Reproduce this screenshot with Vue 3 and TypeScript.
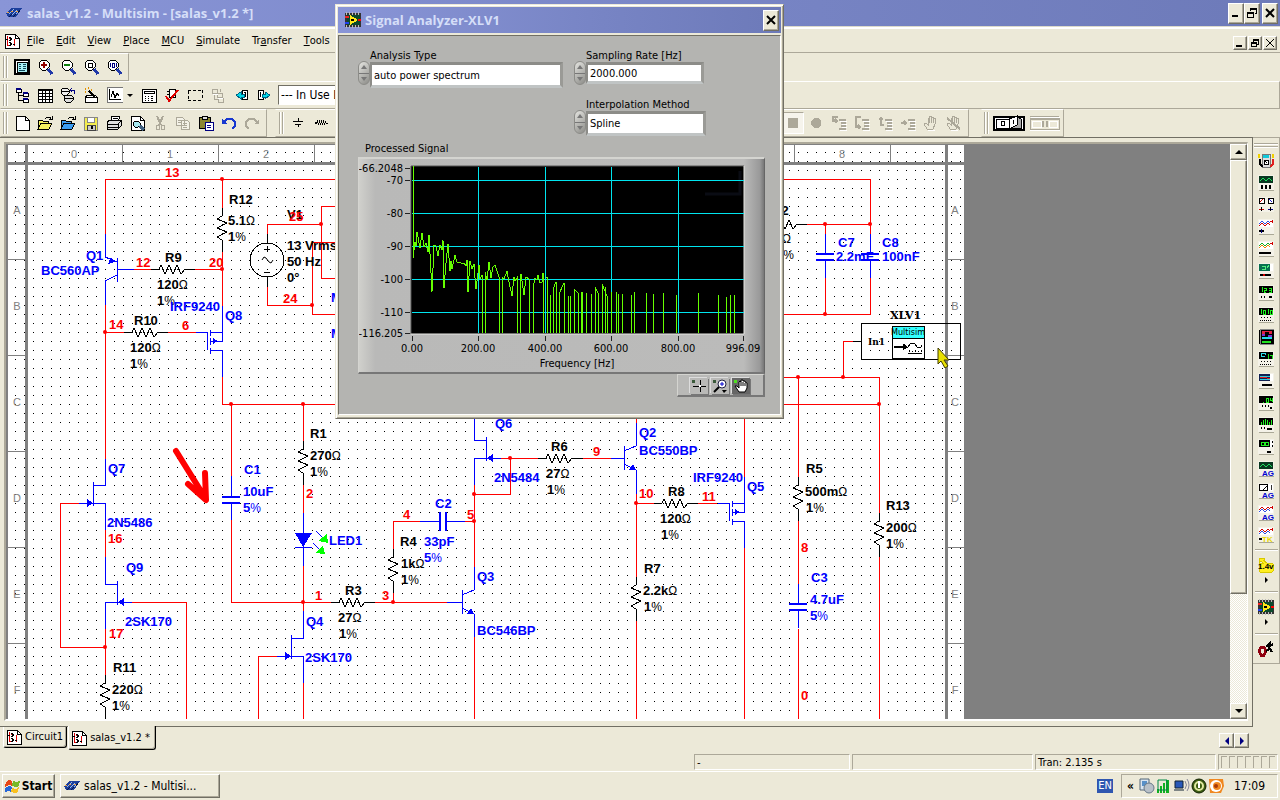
<script setup lang="ts">
import { h, ref } from 'vue'
import type { FunctionalComponent } from 'vue'

type Shape = [d: string, fill?: string, stroke?: string, width?: number]

const K = '#000'
const G = '#aca899'
const N = '#000080'
const R = '#d00000'

const sheet: Shape[] = [['M2 1H11L15 5V15H2Z', '#fff', K], ['M11 1V5H15', 'none', K]]
const docIcon: Shape[] = [
  ['M1 1H11L15 5V15H1Z', '#fff', K], ['M11 1V5H15', 'none', K],
  ['M3 3V12H7M5 5H8M10 6V13', 'none', '#e00000'], ['M5 4L8 6L5 8M5 9L8 11L5 13M2 6H4M9 11H11', 'none', K],
]
const chip: Shape[] = [
  ['M0 8L6 3H16L10 12H2Z', '#1c3f9c'], ['M3 9L8 4M6 10L11 5M9 10L14 5', 'none', '#9cbcec'],
  ['M1 7H3M5 6H7M10 6H12', 'none', '#e8a048'], ['M3 12L6 9M7 12L10 9M12 8L14 5', 'none', '#081848'],
]
const lens = (inner: Shape[]): Shape[] => [
  ['M6 1H9L12 4V8L9 11H5L2 8V4L5 1Z', '#fff', K], ['M11 10L15 15', 'none', '#2038a8', 3], ...inner,
]
const hand: Shape[] = [['M4 14L1 9L3 8L5 10V3H6V8V1H8V8V2H10V8V3H12V9L10 14Z', 'none', G], ['M5 15H12', 'none', '#fff']]
const steps = (arrow: string): Shape[] => [
  ['M9 6H16M11 9H16M11 12H16M9 15H16', 'none', '#fff'],
  ['M8 4H15V6H8ZM10 7H15V9H10ZM10 10H15V12H10ZM8 13H15V15H8Z', G], [arrow, 'none', G, 2],
]
const folder = (front: string): Shape[] => [
  ['M1 14V5H5L6 6H11V8', front, K], ['M1 14L4 8H15L12 14Z', front, K], ['M8 4L10 2H13L14 4M12 4H15V1', 'none', K],
]

const icons: Record<string, Shape[]> = {
  chip, doc: docIcon,
  full: [['M1 1H15V15H1Z', '#fff', K, 2], ['M3 3H13V13H3Z', '#a8f0f4', K], ['M5 5H7M9 5H12M5 7H7M9 7H12M5 9H7M9 9H12M5 11H11', 'none', '#104858']],
  zin: lens([['M4 6H10M7 3V9', 'none', '#900000', 2]]),
  zout: lens([['M4 6H10', 'none', '#108010', 2]]),
  zarea: lens([['M5 4H9V8H5Z', 'none', K]]),
  zfit: lens([['M4 4V8M6 4H8V8H6ZM10 4V8', 'none', N]]),
  tree: [['M2 2H7V5H2ZM9 6H14V9H9ZM9 12H14V15H9Z', '#fff', K], ['M2 2H7M9 6H14M9 12H14', 'none', N, 2], ['M4 5V13H9M4 8H9', 'none', K]],
  table: [['M1 2H15V15H1Z', '#fff', K], ['M1 3H15', 'none', K, 2], ['M1 6H15M1 9H15M1 12H15M5 2V15M8 2V15M12 2V15', 'none', K]],
  db: [['M1 3L3 1H7L9 3V6L7 8H3L1 6Z', '#eee', K], ['M1 4H9', 'none', K], ['M4 10L6 8H11L13 10V13L11 15H6L4 13Z', '#ddd', K], ['M4 11H13', 'none', K], ['M10 3H15M12 1L10 3L12 5M14 3V7', 'none', N]],
  wizard: [['M2 10H14V15H2ZM2 10L5 8H12L14 10', '#fff', K], ['M6 4L12 10', 'none', K, 2], ['M2 2H3M5 1H6M2 5H3M8 3H9', 'none', '#e09000', 2]],
  graph: [['M0 0H16V15H0Z', '#fff', '#777'], ['M2 2V12H14M4 10L6 4L8 11L10 6L12 9', 'none', K]],
  post: [['M1 2H15V15H1Z', '#fff', K], ['M3 4H13V6H3Z', '#fff', K], ['M4 9H5M7 9H8M10 9H12M4 11H5M7 11H8M10 11H12M4 13H5M7 13H8M10 13H12', 'none', K]],
  erc: [['M5 2H11V10H5Z', '#fff', K], ['M3 4H5M3 7H5M11 4H13', 'none', K], ['M2 9L5 14L14 3', 'none', '#e00000', 2]],
  area: [['M1 3H4M6 3H9M11 3H14M15 3V6M15 8V11M14 13H11M9 13H6M4 13H1M1 12V9M1 7V4', 'none', K]],
  parts: [['M2 2H7V6H2ZM7 6H12V10H7ZM8 11H13V15H8ZM4 7V12H8M10 2V5', 'none', G], ['M3 7H8M8 11H13', 'none', '#fff']],
  back: [['M9 3H14V12H9ZM11 5H12V10', '#fff', K], ['M8 5V7H11V10H8V12L3 8Z', '#00d8e8', '#006080']],
  forward: [['M2 3H7V12H2ZM4 5V10', '#fff', K], ['M9 5V7H6V10H9V12L14 8Z', '#00d8e8', '#006080']],
  blank: sheet,
  open: folder('#f4f060'),
  openb: folder('#3c9cf0'),
  save: [['M1 2H14V15H1Z', '#f4ee50', '#888'], ['M4 2H11V7H4Z', '#fff', '#888'], ['M4 10H12V15H4Z', '#ccc', '#444'], ['M9 11V14', 'none', K, 2]],
  print: [['M5 6L6 1H14L12 7', '#fff', K], ['M1 7L4 5H15V11L12 14H1Z', '#ddd', K], ['M1 9H12L15 6M1 12H12M7 3H12M12 9V14', 'none', K]],
  preview: [...sheet, ['M6 6H9L11 8V11L9 12H6L4 10V8Z', '#a8e8f0', K], ['M11 11L15 15', 'none', '#406080', 3]],
  cut: [['M5 1L9 10M11 1L7 10', 'none', G, 2], ['M4 10H7V14H4ZM9 10H12V14H9Z', 'none', G]],
  copy: [['M1 2H7L9 4V10H1ZM6 5H12L14 7V14H6Z', '#f4f2e8', G], ['M3 5H7M3 7H7M8 8H12M8 10H12M8 12H12', 'none', G]],
  paste: [['M1 2H12V13H1Z', '#8c8830', K], ['M4 1H9V4H4Z', '#ddd', K], ['M7 7H15V15H7Z', '#fff', N], ['M9 10H13M9 12H13', 'none', N]],
  undo: [['M3 7L6 4H11L14 7V11L11 14', 'none', '#1838d0', 2], ['M1 4V9H6Z', '#1838d0']],
  redo: [['M13 7L10 4H5L2 7V11L5 14', 'none', G, 2], ['M15 4V9H10Z', G]],
  ground: [['M3 6H13V7H3ZM5 9H11V10H5ZM8 3H9V6H8ZM8 10H9V12H8Z', K]],
  coil: [['M2 7H4V9H2ZM4 5H5V8H4ZM5 8H6V10H5ZM6 5H7V8H6ZM7 8H8V10H7ZM8 5H9V8H8ZM9 8H10V10H9ZM10 5H11V8H10ZM11 8H12V10H11ZM12 6H13V8H12ZM13 8H15V9H13Z', K]],
  stop: [['M3 3H13V13H3Z', G]],
  record: [['M6 3H10L13 6V10L10 13H6L3 10V6Z', G]],
  into: steps('M7 2H2V6H6M4 4L6 6L4 8'),
  over: steps('M7 2H2V12H6M4 10L6 12L4 14'),
  out: steps('M7 10H4V3M2 5L4 3L6 5'),
  cursor: steps('M1 8H6M4 6L6 8L4 10'),
  hand, nohand: [...hand, ['M1 3L14 14', 'none', G, 2]],
  scope: [['M0 1H16V15H0Z', '#333'], ['M2 3H15V13H2Z', '#0a4a2c'], ['M0 5H4', 'none', '#f02020', 2], ['M0 11H4', 'none', '#2040f0', 2], ['M5 3L13 8L5 13Z', '#ffe818'], ['M13 8H16', 'none', '#f00', 2], ['M6 8H9', 'none', K, 2], ['M1 0V3M4 0V3M7 0V3M10 0V3M13 0V3M1 13V16M4 13V16M7 13V16M10 13V16M13 13V16', 'none', '#bbb']],
  probe: [['M1 1H6V3H5L9 6H14L15 7V14L14 15H2L1 14V7L2 6H5L3 4L1 6Z', '#ffef20', '#d8c800']],
  clamp: [['M3 6L1 10L3 14H6L8 10L6 6Z', 'none', '#900010', 3], ['M8 6L12 2L11 6L15 3M8 10L12 8L14 11', 'none', K, 2]],
  flag: [['M1 4L4 2L7 3V8L4 7L0 9Z', '#e84818'], ['M8 3L11 4L15 3L14 8L11 9L7 8Z', '#78b828'], ['M0 10L4 8L7 9L6 14L3 13L0 14Z', '#2868d8'], ['M7 10L11 11L14 9L13 14L10 15L6 14Z', '#f8c020']],
}

const dotRow = 'M3 10H4V11H3ZM6 10H7V11H6ZM9 10H10V11H9ZM12 10H13V11H12ZM2 13H3V14H2ZM4 13H5V14H4ZM6 13H7V14H6ZM8 13H9V14H8ZM10 13H11V14H10ZM12 13H13V14H12Z'
function meter(screen: string, trace: string, color: string, dots = dotRow): Shape[] {
  const filled = dots === dotRow
  return [
    ['M0 0H16V15H0Z', '#f4f2e8'], ['M1 15H16V1', 'none', '#aaa896'], ['M1 1H15V8H1Z', screen], [trace, 'none', color],
    [dots, filled ? K : 'none', filled ? 'none' : K, 2],
  ]
}
const wave = 'M2 6L5 3L8 6L11 3L14 6'
const scopeA = 'M1 5L4 2L7 5L10 2L12 4'
const scopeB = 'M1 7L4 4L7 7L10 4L12 6'
const instruments: { name: string; art: Shape[]; tag?: string; tint?: string }[] = [
  { name: 'Multimeter', art: [['M4 1H12V14H4Z', '#ddd', '#777'], ['M5 2H11V5H5Z', '#10c8d8'], ['M6 7H10V11H6ZM7 8L9 10', '#fff', K], ['M2 6V11L5 14', 'none', K, 2], ['M15 6V11L12 14', 'none', '#e02020', 2], ['M1 1V5M15 1V5', 'none', '#f0d000', 2]] },
  { name: 'Function generator', art: meter('#083820', wave, '#20e060', 'M3 11H5M7 11H9M11 11H13M3 13H5M7 13H9M11 13H13') },
  { name: 'Wattmeter', art: [['M0 0H16V15H0Z', '#f4f2e8'], ['M1 1H6V6H1ZM10 1H15V6H10Z', '#fff', K], ['M2 5L5 2', 'none', R], ['M11 2L14 5', 'none', '#2020d0'], ['M1 12H6', 'none', R], ['M10 12H15', 'none', N], ['M3 10V14M12 10V14', 'none', K]] },
  { name: 'Oscilloscope', art: [...meter('#fff', scopeA, '#3050e0', 'M1 12H6'), [scopeB + 'M12 2H15M14 1V4', 'none', R], ['M3 10V14', 'none', N]] },
  { name: 'Four channel oscilloscope', art: [...meter('#fff', scopeA, '#10b020', 'M1 12H13'), [scopeB, 'none', '#f08000'], ['M12 2H15M14 1V4', 'none', R]] },
  { name: 'Bode plotter', art: [...meter('#087050', 'M4 3H7V6H4M9 5L11 2', '#50f080', 'M2 12H13'), ['M5 12H7', 'none', R, 2], ['M12 1H15V8H12Z', '#fff']] },
  { name: 'Frequency counter', art: meter(K, 'M4 2V7M6 3H8V5H6V7H8M11 3H13V7H11M11 5H13', '#20f020', 'M3 12H4M6 12H7M11 12H14') },
  { name: 'Word generator', art: meter(K, 'M3 2V7M5 3H7V7H5ZM10 2V7M12 3H14V7H12Z', '#20f020') },
  { name: 'Logic converter', art: [['M2 0H16V15H2Z', K, '#888'], ['M4 2H14V5H11V3H7V5H4Z', '#e02040'], ['M4 6H7M10 7H14', 'none', '#8030d0', 2], ['M4 9H14', 'none', '#20d8e8', 2], ['M4 13H13', 'none', '#20e020', 2], ['M1 1V15', 'none', K]] },
  { name: 'Logic analyzer', art: [...meter(K, 'M10 3V8M12 4H14V8', '#20e020'), ['M7 4V2H3V5H7', 'none', '#30e0f0']] },
  { name: 'IV analyzer', art: [...meter('#102050', 'M2 3H12M2 6H12', '#30c8e0', 'M4 12H14'), ['M2 5L6 4L12 6', 'none', '#e02020'], ['M12 1H15V8H12Z', '#fff']] },
  { name: 'Distortion analyzer', art: meter(K, 'M5 7H6M8 3H10V7H8ZM12 3V5H14M14 3V7', '#20f020', 'M4 11H5M7 11H8M10 11H11M12 13H14') },
  { name: 'Spectrum analyzer', art: meter(K, 'M3 8V5M5 8V3M7 8V2M9 8V3M11 8V5M13 8V3', '#20f020', 'M3 11H4M6 11H7M9 12H14') },
  { name: 'Network analyzer', art: [...meter(K, 'M3 3H6V6H3ZM7 3H10V6H7Z', '#20f020', 'M9 13H13'), ['M12 1H15V8H12Z', '#fff'], ['M14 2V4M14 6V8', 'none', K]] },
  { name: 'Agilent function generator', art: meter('#083820', wave, '#20e060', ''), tag: 'AG', tint: '#0000d0' },
  { name: 'Agilent multimeter', art: [...meter('#fff', 'M1 1H9V7H1ZM5 7L9 3', K, ''), ['M13 2V7', 'none', '#333']], tag: 'AG', tint: '#0000d0' },
  { name: 'Agilent oscilloscope', art: [...meter('#fff', scopeA, R, ''), [scopeB, 'none', '#3050e0'], ['M12 2H15M14 1V4', 'none', R]], tag: 'AG', tint: '#0000d0' },
  { name: 'Tektronix oscilloscope', art: [...meter('#fff', scopeA, R, 'M1 12H4'), [scopeB, 'none', '#3050e0'], ['M12 2H15M14 1V4', 'none', R]], tag: 'TK', tint: '#e8d800' },
]

const Icon: FunctionalComponent<{ art: Shape[]; tag?: string; tint?: string }> = (p) =>
  h('svg', { viewBox: '0 0 16 16', width: 16, height: 16, 'shape-rendering': 'crispEdges', 'aria-hidden': 'true' }, [
    ...p.art.map(([d, fill, stroke, width]) => h('path', { d, fill: fill ?? 'none', stroke: stroke ?? 'none', 'stroke-width': width ?? 1 })),
    p.tag ? h('text', { x: 4, y: 15, 'font-size': 8, 'font-weight': 700, fill: p.tint, 'font-family': 'Liberation Sans, sans-serif' }, p.tag) : null,
  ])
Icon.props = ['art', 'tag', 'tint']

const menus: [string, string, string][] = [
  ['', 'F', 'ile'], ['', 'E', 'dit'], ['', 'V', 'iew'], ['', 'P', 'lace'], ['', 'M', 'CU'], ['', 'S', 'imulate'], ['Tr', 'a', 'nsfer'], ['', 'T', 'ools'],
]
const viewTools = ['full', 'zin', 'zout', 'zarea', 'zfit']
const mainTools = ['post', 'erc', 'area', 'parts', 'back', 'forward']
const fileTools = ['blank', 'open', 'openb', 'save', 'print', 'preview', 'cut', 'copy', 'paste', 'undo', 'redo']
const runTools = ['record', 'into', 'over', 'out', 'cursor', 'hand', 'nohand']

const analysis = ref('auto power spectrum')
const rate = ref('2000.000')
const method = ref('Spline')

// Component symbols
const resH = (x: number, y: number) => `M${x} ${y}h8l2 -4l4 9l4 -9l4 9l4 -9l4 9l4 -5h10`
const resV = (x: number, y: number) => `M${x} ${y}v8l-5 3l10 4l-10 5l10 4l-10 5l5 3v12`
const capV = (x: number, y: number) => `M${x} ${y}v20M${x} ${y + 26}v18`
const mos = (x: number, y: number) =>
  `M${x - 26} ${y}h11v18M${x - 12} ${y - 2}v6M${x - 12} ${y + 6}v7M${x - 12} ${y + 16}v6M${x} ${y - 26}v35h-12M${x - 12} ${y}h12M${x - 12} ${y + 18}h12v27`

const resistors = [
  resV(222, 208), resH(151, 269), resH(124, 332), resV(303, 441), resV(105, 675), resH(331, 602), resV(393, 549),
  resH(538, 458), resH(654, 503), resV(636, 577), resH(763, 224), resV(798, 477), resV(879, 513),
  'M267 234V243M267 277V287M853 341H861M264 249H270M267 246V252M264 272H270',
].join('')

const wires = [
  'M105 234V179H870V234M222 179V208M134 269H151M195 269H222M222 250V306M105 305V459M105 332H124M168 332H196',
  'M222 377V404H879M231 404V476M231 520V602H331M303 404V441M303 485V513M303 566V611',
  'M258 719V656H277M303 683V719M267 234V224H321M340 206H321V278H340M267 287V305H312M340 242H312V314H870V277',
  'M79 503H60V647H105M105 530V557M132 602H186V719M105 629V675M375 602H447M474 637V719M474 485V567',
  'M393 549V521H420M393 593V602M465 521H474M501 458H538M510 458V494H474M583 458H611M636 404V423M636 494V577M636 503H654M698 503H717',
  'M744 404V477M744 548V719M636 621V719M807 224H870M825 224V234M825 277V314M853 341H843V377M784 377H879V513M879 557V719',
  'M798 377V477M798 521V584M798 629V719',
].join('')

const parts = [
  'M105 234V257L117 262M117 258V282M117 269H134M117 275L105 281V305',
  mos(222, 332), mos(744, 503), capV(231, 476), capV(825, 234), capV(870, 234), capV(798, 584),
  'M303 513V566M295 547H312M303 611V638H291M291 635V659M277 656H303V683',
  'M105 459V485H93M93 482V506M79 503H105V530M105 557V584H117M117 581V605M132 602H105V629',
  'M447 602H462M462 590V614M462 595L474 590V567M462 608L474 614V637M420 521H439M447 521H465',
  'M474 404V440H486M486 437V461M501 458H474V485M611 458H624M624 446V470M624 451L636 446V423M624 464L636 470V494',
  'M316 531L322 537M313 543L319 549',
].join('')
const plates = 'M222 497H240M222 503H240M816 254H834M816 260H834M861 254H879M861 260H879M789 604H807M789 610H807M440 512V531M446 512V531'
const arrows = [
  'M115 262L108 264L111 257Z', 'M218 341L213 338V344Z', 'M740 512L735 509V515Z', 'M295 533H312L303 547Z', 'M93 503L87 499V507Z',
  'M291 656L285 652V660Z', 'M118 602L124 598V606Z', 'M474 614L467 614L471 608Z', 'M487 458L493 454V462Z', 'M636 470L629 470L633 464Z',
].join('')
const nodes: [number, number][] = [
  [222, 179], [222, 269], [105, 332], [231, 404], [303, 404], [321, 224], [312, 305], [303, 602], [105, 647], [393, 602], [474, 494], [474, 521],
  [510, 458], [636, 503], [825, 224], [870, 224], [825, 314], [798, 377], [843, 377], [879, 404],
]

type Label = [number, number, string]
const blackLabels: Label[] = [
  [229, 204, 'R12'], [228, 225, '5.1Ω'], [228, 241, '1%'], [287, 219, 'V1'], [287, 250, '13 Vrms'], [287, 266, '50 Hz'], [287, 282, '0°'],
  [165, 262, 'R9'], [157, 289, '120Ω'], [157, 305, '1%'], [134, 325, 'R10'], [130, 352, '120Ω'], [130, 368, '1%'],
  [113, 672, 'R11'], [112, 694, '220Ω'], [112, 710, '1%'], [310, 438, 'R1'], [310, 460, '270Ω'], [310, 476, '1%'],
  [345, 595, 'R3'], [338, 622, '27Ω'], [339, 638, '1%'], [400, 546, 'R4'], [401, 568, '1kΩ'], [401, 584, '1%'],
  [551, 451, 'R6'], [546, 478, '27Ω'], [547, 494, '1%'], [668, 496, 'R8'], [660, 523, '120Ω'], [661, 539, '1%'],
  [644, 573, 'R7'], [643, 595, '2.2kΩ'], [644, 611, '1%'], [772, 215, 'R2'], [782, 243, 'Ω'], [776, 259, '1%'],
  [806, 473, 'R5'], [805, 496, '500mΩ'], [806, 512, '1%'], [886, 510, 'R13'], [886, 532, '200Ω'], [886, 548, '1%'],
]
const blueLabels: Label[] = [
  [86, 260, 'Q1'], [41, 275, 'BC560AP'], [170, 311, 'IRF9240'], [225, 320, 'Q8'], [108, 473, 'Q7'], [107, 527, '2N5486'],
  [126, 572, 'Q9'], [125, 626, '2SK170'], [244, 474, 'C1'], [243, 496, '10uF'], [243, 512, '5%'], [329, 545, 'LED1'],
  [306, 626, 'Q4'], [305, 662, '2SK170'], [424, 546, '33pF'], [424, 562, '5%'], [435, 508, 'C2'], [477, 581, 'Q3'],
  [477, 635, 'BC546BP'], [495, 428, 'Q6'], [494, 482, '2N5484'], [639, 437, 'Q2'], [639, 455, 'BC550BP'], [693, 482, 'IRF9240'],
  [747, 491, 'Q5'], [838, 247, 'C7'], [836, 261, '2.2mF'], [882, 247, 'C8'], [882, 261, '100nF'], [811, 582, 'C3'],
  [810, 604, '4.7uF'], [810, 620, '5%'], [331, 302, 'M'], [331, 338, 'M'],
]
const redLabels: Label[] = [
  [165, 177, '13'], [289, 221, '25'], [136, 267, '12'], [209, 267, '20'], [109, 329, '14'], [182, 330, '6'], [283, 303, '24'],
  [108, 543, '16'], [109, 638, '17'], [306, 498, '2'], [315, 600, '1'], [382, 600, '3'], [403, 519, '4'], [467, 519, '5'],
  [593, 456, '9'], [639, 498, '10'], [702, 501, '11'], [801, 552, '8'], [801, 700, '0'],
]
const labelSets: [string, Label[]][] = [['ink', blackLabels], ['part', blueLabels], ['net', redLabels]]
const stem = (s: string) => s.replace(/[Ω%]$/, '')
const unit = (s: string) => s.slice(stem(s).length)

const columnsRuler = [0, 1, 2, 3, 4, 5, 6, 7, 8]
const rowsRuler = ['A', 'B', 'C', 'D', 'E', 'F']

// Spectrum, in plot pixels
const envelope =
  'M1 0V92L3 76L4 80L5 66L8 82L10 67L12 81L14 77L16 86L17 69L20 126L22 79L24 80L26 90L28 79L30 84L31 74L32 122L34 97L36 78L38 105L39 95L40 103L43 89L45 96L48 96L50 98L52 97L54 100L55 94L56 126L58 95L60 103L62 98L63 112L64 123L67 99L68 113L70 109V167' +
  'M73 167V106L75 114L77 96L79 112L81 101L83 99L87 111V167M90 167V111L92 113L95 105L97 116L100 130L102 111L103 115L105 112V167M108 167V113L109 108L112 129L114 111L117 113V167M121 167V122L123 112L125 114L126 109L128 117L130 116L131 107V167M134 111H135V167'
const spikes: [number, number][] = [
  [138, 129], [141, 123], [144, 116], [147, 128], [152, 117], [156, 130], [158, 130], [162, 123], [166, 127], [169, 126], [170, 126], [174, 127], [179, 128],
  [183, 121], [186, 127], [190, 118], [193, 121], [195, 130], [199, 126], [204, 126], [206, 128], [210, 128], [219, 129], [222, 126], [234, 127], [241, 128],
  [251, 127], [264, 129], [286, 127], [306, 129], [314, 131], [318, 129], [322, 129],
]
const spectrum = envelope + spikes.map(([x, y]) => `M${x} 167V${y}`).join('') + 'M141 123L144 116M147 128L152 117M162 123L166 127M183 121L186 127M190 118L195 130'
const yTicks: [number, string][] = [[11, '-66.2048'], [23, '-70'], [56, '-80'], [89, '-90'], [122, '-100'], [155, '-110'], [176, '-116.205']]
const xTicks: [number, string][] = [[54, '0.00'], [120, '200.00'], [187, '400.00'], [253, '600.00'], [320, '800.00'], [385, '996.09']]
</script>

<template>
  <div class="screen">
    <header class="titlebar">
      <Icon :art="icons.chip" />
      <h1>salas_v1.2 - Multisim - [salas_v1.2 *]</h1>
      <div class="winbtns">
        <button type="button" class="cap" aria-label="Minimize"><svg viewBox="0 0 10 10" width="10" height="10"><path d="M1 7H7V9H1Z" /></svg></button>
        <button type="button" class="cap" aria-label="Restore"><svg viewBox="0 0 10 10" width="10" height="10"><path d="M3 0H10V6H8V5H9V2H4V3H3ZM0 4H7V10H0ZM1 6V9H6V6Z" fill-rule="evenodd" /></svg></button>
        <button type="button" class="cap last" aria-label="Close"><svg viewBox="0 0 10 10" width="10" height="10"><path d="M1 1L9 9M9 1L1 9" stroke="#000" stroke-width="2" /></svg></button>
      </div>
    </header>

    <nav class="menubar" aria-label="Main menu">
      <Icon :art="icons.doc" />
      <button v-for="m in menus" :key="m[1] + m[2]" type="button">{{ m[0] }}<u>{{ m[1] }}</u>{{ m[2] }}</button>
      <div class="winbtns small">
        <button type="button" class="cap" aria-label="Minimize document"><svg viewBox="0 0 8 8" width="8" height="8"><path d="M0 6H6V8H0Z" /></svg></button>
        <button type="button" class="cap" aria-label="Restore document"><svg viewBox="0 0 8 8" width="8" height="8" shape-rendering="crispEdges"><path d="M2 0H8V6H6V5H7V2H3V3H2ZM0 3H6V8H0ZM1 5V7H5V5Z" fill-rule="evenodd" /></svg></button>
        <button type="button" class="cap" aria-label="Close document"><svg viewBox="0 0 8 8" width="8" height="8"><path d="M0 0L8 8M8 0L0 8" stroke="#000" /></svg></button>
      </div>
    </nav>

    <div class="row">
      <div class="toolbar">
        <span class="grip"></span>
        <button v-for="t in viewTools" :key="t" type="button" class="tool" :aria-label="t"><Icon :art="icons[t]" /></button>
      </div>
    </div>

    <div class="row">
      <div class="toolbar wide">
        <span class="grip"></span>
        <button v-for="t in ['tree', 'table', 'db', 'wizard']" :key="t" type="button" class="tool" :aria-label="t"><Icon :art="icons[t]" /></button>
        <button type="button" class="tool drop" aria-label="Grapher"><Icon :art="icons.graph" /><span class="caret"></span></button>
        <button v-for="t in mainTools" :key="t" type="button" class="tool" :aria-label="t"><Icon :art="icons[t]" /></button>
        <select class="inuse" aria-label="In use list"><option>--- In Use List ---</option></select>
      </div>
    </div>

    <div class="row">
      <div class="toolbar">
        <span class="grip"></span>
        <button v-for="t in fileTools" :key="t" type="button" class="tool" :aria-label="t"><Icon :art="icons[t]" /></button>
      </div>
      <div class="toolbar sim">
        <span class="grip"></span>
        <button v-for="t in ['ground', 'coil']" :key="t" type="button" class="tool" :aria-label="t"><Icon :art="icons[t]" /></button>
        <button type="button" class="tool stop" aria-label="stop"><Icon :art="icons.stop" /></button>
        <button v-for="t in runTools" :key="t" type="button" class="tool" :aria-label="t"><Icon :art="icons[t]" /></button>
      </div>
      <div class="toolbar power">
        <span class="grip"></span>
        <button type="button" class="switch" aria-label="Run switch">
          <svg viewBox="0 0 32 16" width="32" height="16" shape-rendering="crispEdges">
            <path d="M1 2H31V15H1Z" fill="#fff" stroke="#000" stroke-width="2" /><path d="M3 4H16V13H3Z" fill="#fff" stroke="#000" />
            <path d="M17 13H28V4L24 1L23 10Z" fill="#aaa" stroke="#000" /><path d="M16 4L19 3L24 1V10L18 13H16Z" fill="#fff" stroke="#000" />
            <path d="M8 6H11V10H8ZM20 5V9" fill="none" stroke="#000" />
          </svg>
        </button>
        <button type="button" class="switch" aria-label="Pause">
          <svg viewBox="0 0 32 16" width="32" height="16" shape-rendering="crispEdges">
            <path d="M1 1H30M1 3H30V14H1ZM1 4H30" fill="none" stroke="#aca899" /><path d="M14 6V12M18 6V12" stroke="#aca899" stroke-width="2" />
            <path d="M2 2H31M3 12V6H12V12ZM20 6H28V12H20ZM1 15H31" fill="none" stroke="#fff" />
          </svg>
        </button>
      </div>
    </div>

    <div class="middle">
      <main class="frame">
        <div class="desk">
          <div class="sheet">
            <svg class="canvas" viewBox="8 145 956 574" width="956" height="574">
              <defs>
                <pattern id="dots" x="15" y="152" width="9" height="9" patternUnits="userSpaceOnUse"><rect width="1" height="1" /></pattern>
              </defs>
              <rect x="8" y="145" width="956" height="574" fill="#fff" />
              <rect x="8" y="145" width="956" height="574" fill="url(#dots)" />
              <g class="ruler">
                <path d="M25 145h3v574h-3zM945 145h3v574h-3zM8 162h956v3H8z" />
                <rect v-for="c in columnsRuler" :key="c" :x="122 + 96 * c" y="145" width="1" height="17" />
                <g v-for="(r, i) in rowsRuler" :key="r">
                  <rect x="8" :y="259 + 96 * i" width="17" height="1" /><rect x="948" :y="259 + 96 * i" width="16" height="1" />
                  <text x="17" :y="214 + 96 * i">{{ r }}</text><text x="955" :y="214 + 96 * i">{{ r }}</text>
                </g>
                <text v-for="c in columnsRuler" :key="'n' + c" :x="74 + 96 * c" y="158">{{ c }}</text>
              </g>
              <g fill="none" stroke-width="1" shape-rendering="crispEdges">
                <path :d="wires" stroke="#f00" />
                <path :d="resistors" stroke="#000" />
                <path :d="parts" stroke="#00f" />
                <path :d="plates" stroke="#00f" stroke-width="2" />
                <path :d="arrows" fill="#00f" />
                <path d="M327 534L318 541L328 543ZM323 546L315 553L325 554Z" fill="#0f0" />
              </g>
              <circle cx="267" cy="260" r="17" fill="none" stroke="#000" shape-rendering="crispEdges" />
              <path d="M262 260L264 257L266 258L269 262L271 263L273 260" fill="none" stroke="#000" />
              <circle v-for="n in nodes" :key="n.join()" :cx="n[0]" :cy="n[1]" r="2" fill="#f00" />
              <g class="labels">
                <g v-for="set in labelSets" :key="set[0]" :class="set[0]">
                  <text v-for="l in set[1]" :key="l.join()" :x="l[0]" :y="l[1]">{{ stem(l[2]) }}<tspan v-if="unit(l[2])" class="unit">{{ unit(l[2]) }}</tspan></text>
                </g>
              </g>
              <g shape-rendering="crispEdges" stroke="#000" fill="none">
                <path d="M861 323H960V359H861Z" /><path d="M892 326H924V358H892Z" fill="#fff" /><path d="M892 326H924V338H892Z" fill="#3ff" />
                <path d="M894 347H903" stroke-width="2" /><path d="M903 344L907 347L903 350Z" fill="#000" />
                <path d="M907 348L911 343H914L918 348L921 347V345M909 352V350M912 352V351M915 352V350M918 352V351M921 352V350M908 353H922" />
              </g>
              <text x="908" y="335" class="mini">Multisim</text>
              <text x="868" y="345" class="serif small">In1</text>
              <text x="890" y="319" class="serif">XLV1</text>
              <path d="M176 451L204 496M188 484L206 500L205 473" fill="none" stroke="#f00" stroke-width="6" stroke-linecap="round" stroke-linejoin="round" />
              <path d="M938 348V364L941 361L945 368L948 366L944 360H949Z" fill="#e8e000" stroke="#403c00" />
            </svg>
          </div>
          <div class="vscroll">
            <button type="button" class="sb" aria-label="Scroll up"><span class="tri up"></span></button>
            <div class="track"><div class="thumb"></div></div>
            <button type="button" class="sb" aria-label="Scroll down"><span class="tri down"></span></button>
          </div>
        </div>
      </main>

      <aside class="instruments" aria-label="Instruments">
        <span class="hgrip"></span>
        <button v-for="i in instruments" :key="i.name" type="button" class="inst" :aria-label="i.name"><Icon :art="i.art" :tag="i.tag" :tint="i.tint" /></button>
        <span class="sep"></span>
        <button type="button" class="inst probe" aria-label="Measurement probe"><Icon :art="icons.probe" /><b>1.4v</b></button>
        <span class="side"></span>
        <span class="sep"></span>
        <button type="button" class="inst" aria-label="LabVIEW instrument"><Icon :art="icons.scope" /></button>
        <span class="side"></span>
        <span class="sep"></span>
        <button type="button" class="inst" aria-label="Current probe"><Icon :art="icons.clamp" /></button>
      </aside>
    </div>

    <div class="tabs">
      <button type="button" class="tab"><Icon :art="icons.doc" />Circuit1</button>
      <button type="button" class="tab on"><Icon :art="icons.doc" />salas_v1.2 *</button>
      <div class="tabnav">
        <button type="button" aria-label="Previous sheet"><span class="tri left"></span></button>
        <button type="button" aria-label="Next sheet"><span class="tri right"></span></button>
      </div>
    </div>

    <footer class="status">
      <span class="pane a">-</span><span class="pane b"></span><span class="pane c">Tran: 2.135 s</span>
      <span class="pane cells"><i v-for="n in 7" :key="n"></i></span>
    </footer>

    <div class="taskbar">
      <button type="button" class="start"><Icon :art="icons.flag" />Start</button>
      <button type="button" class="task"><Icon :art="icons.chip" />salas_v1.2 - Multisi...</button>
      <span class="lang">EN</span>
      <div class="tray">
        <span class="chev">«</span>
        <svg viewBox="0 0 86 16" width="86" height="16">
          <path d="M1 1H10V12H1Z" fill="#d8e4f0" stroke="#567" /><path d="M3 3H8V8H3Z" fill="#5890c8" /><circle cx="10" cy="10" r="5" fill="#b8c0c8" stroke="#678" />
          <path d="M18 15V11H20V15M21 15V8H23V15M24 15V5H26V15M27 15V2H30V15Z" fill="#10b020" /><path d="M19 2H28V12H19Z" fill="none" stroke="#084" />
          <path d="M36 3H44V10H36ZM35 12H45" fill="#2858b8" stroke="#123" /><path d="M46 3Q49 7 46 11M48 1Q52 7 48 13" fill="none" stroke="#889" />
          <circle cx="60" cy="8" r="7" fill="#3c5c10" stroke="#102000" /><circle cx="60" cy="8" r="4" fill="none" stroke="#e0e8a0" stroke-width="2" /><path d="M60 3V10" stroke="#fff" stroke-width="2" />
          <path d="M70 1H84L85 8L82 15H71Z" fill="#f08820" /><circle cx="77" cy="8" r="6" fill="#fff" /><circle cx="78" cy="8" r="4" fill="#f08820" /><circle cx="77" cy="8" r="2" fill="#a83808" />
        </svg>
        <time>17:09</time>
      </div>
    </div>

    <section class="dialog" role="dialog" aria-labelledby="dlg-title">
      <div class="dlg-title">
        <Icon :art="icons.scope" />
        <h2 id="dlg-title">Signal Analyzer-XLV1</h2>
        <button type="button" class="cap" aria-label="Close analyzer"><svg viewBox="0 0 10 10" width="10" height="10"><path d="M1 1L9 9M9 1L1 9" stroke="#000" stroke-width="2" /></svg></button>
      </div>
      <div class="dlg-body">
        <div class="controls">
          <div class="ctl">
            <label for="analysis">Analysis Type</label>
            <div class="line"><span class="spin"><button type="button" aria-label="Previous analysis"><span class="chevron up"></span></button><button type="button" aria-label="Next analysis"><span class="chevron down"></span></button></span><input id="analysis" v-model="analysis" type="text" class="wide" /></div>
          </div>
          <div class="stack">
            <div class="ctl">
              <label for="rate">Sampling Rate [Hz]</label>
              <div class="line"><span class="spin"><button type="button" aria-label="Increase rate"><span class="chevron up"></span></button><button type="button" aria-label="Decrease rate"><span class="chevron down"></span></button></span><input id="rate" v-model="rate" type="text" class="short" /></div>
            </div>
            <div class="ctl">
              <label for="method">Interpolation Method</label>
              <div class="line"><span class="spin"><button type="button" aria-label="Previous method"><span class="chevron up"></span></button><button type="button" aria-label="Next method"><span class="chevron down"></span></button></span><input id="method" v-model="method" type="text" /></div>
            </div>
          </div>
        </div>
        <h3>Processed Signal</h3>
        <div class="graph">
          <svg viewBox="1 2 405 213" width="405" height="213" role="img" aria-label="Power spectrum">
            <rect x="53" y="9" width="333" height="168" fill="#000" />
            <path d="M53 177V9H386" fill="none" stroke="#555" /><path d="M53 177H386V9" fill="none" stroke="#e8e8e4" />
            <path d="M347 37H382V14" fill="none" stroke="#0a0c14" stroke-width="3" />
            <g shape-rendering="crispEdges" fill="none" stroke="#00e5ee">
              <path d="M54 23H386M54 56H386M54 89H386M54 122H386M54 155H386M120 10V176M187 10V176M253 10V176M320 10V176" />
            </g>
            <g transform="translate(54 9)"><path :d="spectrum" fill="none" stroke="#6f0" shape-rendering="crispEdges" /></g>
            <g shape-rendering="crispEdges">
              <path v-for="t in yTicks" :key="t[1]" :d="`M47 ${t[0]}h5`" stroke="#222" />
              <path v-for="t in xTicks" :key="t[1]" :d="`M${t[0]} 179v5`" stroke="#222" />
            </g>
            <text v-for="t in yTicks" :key="'l' + t[1]" x="45" :y="t[0] + 4" text-anchor="end">{{ t[1] }}</text>
            <text v-for="t in xTicks" :key="'l' + t[1]" :x="t[0]" y="195" text-anchor="middle">{{ t[1] }}</text>
            <text x="219" y="210" text-anchor="middle">Frequency [Hz]</text>
          </svg>
        </div>
        <div class="palette">
          <button type="button" aria-label="Cursor"><svg viewBox="0 0 18 16" width="18" height="16" shape-rendering="crispEdges"><path d="M2 2h3v3h-3z" fill="#3a5a3a" /><path d="M3 8H16M10 2V14" stroke="#000" /><path d="M9 7h2v2h-2z" fill="#fff" /></svg></button>
          <button type="button" aria-label="Zoom"><svg viewBox="0 0 18 16" width="18" height="16"><path d="M2 2h3v3h-3z" fill="#3a5a3a" /><circle cx="11" cy="6" r="4" fill="#fff" stroke="#224" /><path d="M11 4V8M9 6H13" stroke="#00c" /><path d="M8 9L3 14" stroke="#000" stroke-width="2" /><path d="M11 12H16L13 15Z" /></svg></button>
          <button type="button" class="down" aria-label="Pan"><svg viewBox="0 0 18 16" width="18" height="16"><path d="M2 2h3v3h-3z" fill="#50e020" /><path d="M7 14L3 8L5 8L7 10V4L8 3L9 4V2H11V3L13 3V4L15 5V10L13 14Z" fill="#fff" stroke="#000" /><path d="M9 4V8M11 4V8M13 5V8" stroke="#000" /></svg></button>
        </div>
      </div>
    </section>
  </div>
</template>

<style>
html, body { margin: 0; background: #ece9d8; }
body { overflow: hidden; }
</style>

<style scoped>
.screen {
  position: relative; display: flex; flex-direction: column; height: 100vh; overflow: hidden;
  background: #ece9d8; color: #000; font: 11px/14px Tahoma, "DejaVu Sans Condensed", "Noto Sans", sans-serif;
}
button { font: inherit; color: inherit; margin: 0; padding: 0; border: 0; background: none; display: flex; align-items: center; justify-content: center; white-space: nowrap; }
svg { display: block; flex: none; }
h1, h2, h3 { margin: 0; }

.titlebar, .dlg-title { display: flex; align-items: center; background: linear-gradient(90deg, #8995d7, #7784c4 60%, #6d7ab9); }
.titlebar { height: 26px; padding: 0 2px 0 6px; flex: none; border-bottom: 1px solid #dcdacb; }
.titlebar h1, .dlg-title h2 { font: bold 13px/16px "Trebuchet MS", "Open Sans", sans-serif; color: #d5def8; white-space: nowrap; }
.titlebar h1 { margin-left: 5px; }
.winbtns { margin-left: auto; display: flex; }
.cap { width: 16px; height: 21px; background: #ece9d8; border: 1px solid; border-color: #fff #716f64 #716f64 #fff; box-shadow: inset -1px -1px #aca899; box-sizing: border-box; }
.cap.last { margin-left: 2px; }
.small .cap { height: 14px; width: 14px; margin-left: 1px; }

.menubar { display: flex; align-items: center; height: 23px; padding: 0 3px 0 4px; flex: none; border-top: 2px solid #fff; border-bottom: 1px solid #aca899; }
.menubar > button { padding: 0 6px; height: 20px; }
.menubar > svg + button { margin-left: 1px; }
.menubar > .small { align-self: flex-end; margin-bottom: 2px; }

.row { display: flex; flex: none; height: 28px; }
.toolbar { display: flex; align-items: center; box-sizing: border-box; padding-left: 2px; border: 1px solid; border-color: #fff #aca899 #aca899 transparent; }
.toolbar.wide { flex: 1; }
.grip { width: 4px; height: 22px; margin-right: 3px; border: solid; border-width: 0 1px; border-color: #aca899; box-shadow: 1px 0 #fff, inset 1px 0 #fff; flex: none; box-sizing: border-box; }
.tool { width: 23px; height: 22px; flex: none; }
.toolbar > .tool:last-child { margin-right: 3px; }
.drop { width: 35px; gap: 4px; }
.caret { border: 3px solid transparent; border-top-color: #000; border-bottom: 0; }
.inuse { width: 150px; height: 20px; margin-left: 3px; padding: 0 2px; border: 1px solid #716f64; border-right-color: #fff; border-bottom-color: #fff; background: #fff; font: inherit; font-size: 12px; color: #000; appearance: none; }
.sim { width: 694px; margin-left: 8px; padding-left: 3px; }
.stop { margin-left: auto; background: #f6f4ec; border: 1px solid; border-color: #aca899 #fff #fff #aca899; box-sizing: border-box; }
.power { margin-left: 12px; }
.switch { margin: 0 2px; }

.middle { display: flex; flex: 1; min-height: 0; }
.frame { flex: 1; min-width: 0; display: flex; border: 1px solid #716f64; border-left: 0; padding: 4px 4px 5px; box-sizing: border-box; }
.desk { flex: 1; min-width: 0; display: flex; background: #808080; border: solid; border-width: 2px 1px 2px 2px; border-color: #aca899 #fff #fff #aca899; overflow: hidden; }
.sheet { flex: 1; min-width: 0; overflow: hidden; padding: 1px 0 0 2px; }
.ruler { fill: #808080; font-size: 11px; text-anchor: middle; font-family: "Liberation Sans", Arial, sans-serif; }
.labels { font: bold 13px "Liberation Sans", Arial, sans-serif; }
.unit { font-size: 12px; font-weight: normal; }
.ink { fill: #000; }
.part { fill: #00f; }
.net { fill: #f00; }
.mini { font-size: 9px; text-anchor: middle; }
.serif { font: bold 11px "DejaVu Serif", serif; }
.serif.small { font-size: 9px; }

.vscroll { width: 17px; display: flex; flex-direction: column; background: #ece9d8; flex: none; }
.sb, .thumb, .tabnav button { background: #ece9d8; border: 1px solid; border-color: #fff #716f64 #716f64 #fff; box-shadow: inset -1px -1px #aca899; box-sizing: border-box; }
.sb { height: 16px; width: 17px; flex: none; }
.track { flex: 1; background: repeating-conic-gradient(#fff 0 25%, #ece9d8 0 50%) 0 0 / 2px 2px; }
.thumb { height: 80%; }
.tri { width: 0; height: 0; border: 4px solid transparent; }
.tri.up { border-bottom-color: #000; border-top: 0; }
.tri.down { border-top-color: #000; border-bottom: 0; }
.tri.left { border-right-color: #000080; border-left: 0; }
.tri.right { border-left-color: #000080; border-right: 0; }

.instruments { width: 27px; align-self: flex-start; box-sizing: border-box; display: flex; flex-direction: column; align-items: center; border: solid #aca899; border-width: 1px 1px 1px 0; padding-bottom: 3px; }
.hgrip { width: 24px; height: 4px; margin: 5px 0 3px; box-sizing: border-box; border: solid #aca899; border-width: 1px 0; box-shadow: 0 1px #fff, inset 0 1px #fff; }
.inst { width: 22px; height: 22px; position: relative; }
.probe b { position: absolute; left: 3px; top: 9px; font: bold 8px/8px "Liberation Sans", sans-serif; }
.sep { width: 23px; height: 1px; margin: 3px 0 4px; background: #aca899; box-shadow: 0 1px #fff; }
.side { border: 3px solid transparent; border-left-color: #000; border-right: 0; margin: 1px 0 5px; }

.tabs { display: flex; align-items: flex-start; height: 24px; flex: none; padding-left: 3px; }
.tab { height: 21px; padding: 0 3px 0 2px; gap: 3px; border: 1px solid #000; border-top: 0; border-left-color: #fff; border-radius: 0 0 3px 3px; box-shadow: inset -1px -1px #aca899; box-sizing: border-box; }
.tab.on { height: 24px; margin: -1px 0 0 1px; padding-right: 5px; background: #ece9d8; position: relative; }
.tabnav { margin: 6px 31px 0 auto; display: flex; }
.tabnav button { width: 15px; height: 15px; }

.status { display: flex; justify-content: flex-end; gap: 2px; height: 16px; padding: 3px 2px 1px 0; flex: none; }
.pane { border: 1px solid; border-color: #aca899 #fff #fff #aca899; padding-left: 2px; box-sizing: border-box; line-height: 15px; }
.a { width: 156px; }
.b, .c { width: 181px; }
.cells { width: 60px; display: flex; gap: 2px; padding: 1px 2px; }
.cells i { flex: 1; border: solid #aca899; border-width: 1px 0 0 1px; }

.taskbar { display: flex; align-items: center; height: 28px; padding: 0 2px; flex: none; border-top: 1px solid #fff; }
.start, .task { height: 24px; border: 1px solid; border-color: #fff #716f64 #716f64 #fff; box-shadow: inset -1px -1px #aca899; box-sizing: border-box; }
.start { width: 53px; gap: 1px; font-weight: bold; font-size: 12px; }
.task { width: 160px; margin-left: 5px; padding-left: 3px; gap: 4px; justify-content: flex-start; font-size: 12px; }
.lang { margin-left: auto; padding: 0 1px; background: #2f56b0; color: #fff; }
.tray { display: flex; align-items: center; gap: 5px; width: 157px; height: 24px; margin-left: 8px; padding-left: 5px; box-sizing: border-box; border: 1px solid; border-color: #aca899 #fff #fff #aca899; font-size: 12px; }
.tray time { margin-left: 4px; }
.chev { font-weight: bold; }

.dialog { position: absolute; left: 335px; top: 4px; width: 449px; box-sizing: border-box; background: #ece9d8; border: 1px solid; border-color: #ece9d8 #716f64 #716f64 #ece9d8; box-shadow: inset 1px 1px #fff, inset -1px -1px #aca899; padding: 2px 2px 3px 2px; }
.dlg-title { height: 26px; padding: 0 2px 0 7px; }
.dlg-title h2 { margin-left: 4px; }
.dlg-title .cap { margin-left: auto; }
.dlg-body { margin-top: 2px; border: 1px solid; border-color: #716f64 #fff #fff #716f64; background: #b4b4b1; padding: 13px 14px 17px 19px; }
.controls { display: flex; gap: 11px; }
.ctl label { display: block; margin-left: 12px; line-height: 13px; }
.line { display: flex; align-items: flex-start; }
.line input { width: 120px; height: 25px; box-sizing: border-box; border: solid; border-width: 3px 3px 3px 2px; border-color: #8c8c88 #9a9a96 #c0c4c4 #8c8c88; background: #fff; padding: 0 2px; font: inherit; color: #000; }
.line input.wide { width: 193px; height: 26px; }
.line input.short { width: 118px; height: 22px; }
.spin { width: 12px; height: 24px; margin-top: -1px; border-radius: 6px; background: linear-gradient(135deg, #e4e4e0, #8c8c88); border: 1px solid #8c8c88; box-sizing: border-box; display: flex; flex-direction: column; }
.spin button { flex: 1; }
.spin button + button { border-top: 1px solid #777; }
.chevron { border: 3px solid transparent; }
.chevron.up { border-top: 0; border-bottom: 4px solid #777; }
.chevron.down { border-bottom: 0; border-top: 4px solid #777; }
.stack { display: flex; flex-direction: column; gap: 13px; }
h3 { font: inherit; margin: 6px 0 1px 7px; line-height: 14px; }
.graph { border: solid; border-width: 2px 1px; border-color: #d4d4d0 #666 #777 #d4d4d0; background: linear-gradient(90deg, #d0d0cc, #b9b9b8 4%, #bbbbba 95%, #999 99%, #777); width: 405px; }
.palette { display: flex; gap: 3px; margin: 0 0 0 319px; width: 88px; height: 23px; box-sizing: border-box; padding: 3px 0 0 12px; background: #b9b9b7; border: solid; border-width: 1px 2px 2px 1px; border-color: #d4d4d0 #777 #777 #d4d4d0; }
.palette button { width: 18px; height: 16px; box-shadow: 1px 1px #777, -1px -1px #ddd; }
.palette .down { background: #666; }
</style>
